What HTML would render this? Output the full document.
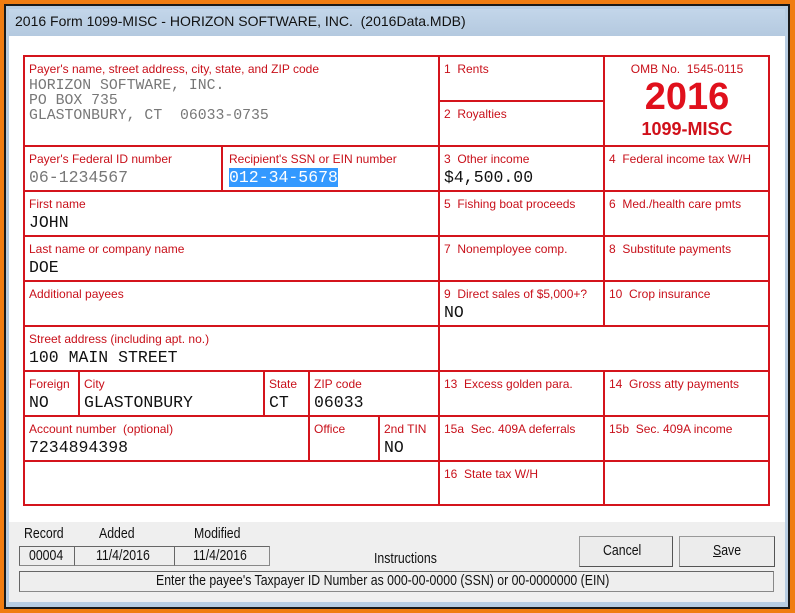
<!DOCTYPE html><html><head><style>
body{margin:0;width:795px;height:613px;overflow:hidden;background:#f07d12;position:relative;font-family:"Liberation Sans",sans-serif}
.a{position:absolute}
.h{position:absolute;height:2px;background:#d4141c}
.v{position:absolute;width:2px;background:#d4141c}
.l{position:absolute;color:#c8101a;font-size:12px;white-space:nowrap}
.t{position:absolute;font-family:"Liberation Mono",monospace;font-size:16.5px;color:#111;white-space:nowrap;margin-top:2px}
.g{color:#777}
.s{font-size:15px;color:#111;position:absolute;white-space:nowrap;transform:scaleX(.82);transform-origin:left}
.box{position:absolute;border:1px solid #888;border-top-color:#666;border-left-color:#666;background:#eee;height:18px}
</style></head><body>
<div class="a" style="left:4px;top:4px;width:786px;height:605px;background:#1a1a1a"></div>
<div class="a" style="left:6px;top:6px;width:782px;height:601px;background:#b8cde2"></div>
<div class="a" style="left:9px;top:9px;width:776px;height:27px;background:linear-gradient(#c3d6ea,#b4c9df)"></div>
<div class="a" style="left:15px;top:13px;font-size:14px;color:#111">2016 Form 1099-MISC - HORIZON SOFTWARE, INC.&nbsp; (2016Data.MDB)</div>
<div class="a" style="left:9px;top:36px;width:776px;height:486px;background:#fff"></div>
<div class="a" style="left:9px;top:522px;width:776px;height:80px;background:#efefef"></div>

<div class="h" style="left:23px;top:55px;width:747px"></div>
<div class="h" style="left:23px;top:145px;width:747px"></div>
<div class="h" style="left:23px;top:190px;width:747px"></div>
<div class="h" style="left:23px;top:235px;width:747px"></div>
<div class="h" style="left:23px;top:280px;width:747px"></div>
<div class="h" style="left:23px;top:325px;width:747px"></div>
<div class="h" style="left:23px;top:370px;width:747px"></div>
<div class="h" style="left:23px;top:415px;width:747px"></div>
<div class="h" style="left:23px;top:460px;width:747px"></div>
<div class="h" style="left:23px;top:504px;width:747px"></div>
<div class="h" style="left:439px;top:100px;width:166px"></div>
<div class="v" style="left:23px;top:55px;height:451px"></div>
<div class="v" style="left:768px;top:55px;height:451px"></div>
<div class="v" style="left:438px;top:55px;height:451px"></div>
<div class="v" style="left:603px;top:55px;height:272px"></div>
<div class="v" style="left:603px;top:370px;height:136px"></div>
<div class="v" style="left:221px;top:145px;height:47px"></div>
<div class="v" style="left:78px;top:370px;height:47px"></div>
<div class="v" style="left:263px;top:370px;height:47px"></div>
<div class="v" style="left:308px;top:370px;height:92px"></div>
<div class="v" style="left:378px;top:415px;height:47px"></div>

<div class="l" style="left:29px;top:62px">Payer's name, street address, city, state, and ZIP code</div>
<div class="t g" style="left:29px;top:77px;line-height:15px;font-size:14.8px">HORIZON SOFTWARE, INC.<br>PO BOX 735<br>GLASTONBURY, CT&nbsp; 06033-0735</div>
<div class="l" style="left:444px;top:62px">1&nbsp; Rents</div>
<div class="l" style="left:444px;top:107px">2&nbsp; Royalties</div>
<div class="l" style="left:604px;top:62px;width:166px;text-align:center">OMB No.&nbsp; 1545-0115</div>
<div class="a" style="left:604px;top:76px;width:166px;text-align:center;color:#e0101c;font-weight:bold;font-size:38px;line-height:42px">2016</div>
<div class="a" style="left:604px;top:119px;width:166px;text-align:center;color:#d0101a;font-weight:bold;font-size:18px">1099-MISC</div>

<div class="l" style="left:29px;top:152px">Payer's Federal ID number</div>
<div class="t g" style="left:29px;top:166px">06-1234567</div>
<div class="l" style="left:229px;top:152px">Recipient's SSN or EIN number</div>
<div class="t" style="left:229px;top:166px;background:#3399ff;color:#fff;line-height:19px">012-34-5678</div>
<div class="l" style="left:444px;top:152px">3&nbsp; Other income</div>
<div class="t" style="left:444px;top:166px">$4,500.00</div>
<div class="l" style="left:609px;top:152px">4&nbsp; Federal income tax W/H</div>

<div class="l" style="left:29px;top:197px">First name</div>
<div class="t" style="left:29px;top:211px">JOHN</div>
<div class="l" style="left:444px;top:197px">5&nbsp; Fishing boat proceeds</div>
<div class="l" style="left:609px;top:197px">6&nbsp; Med./health care pmts</div>

<div class="l" style="left:29px;top:242px">Last name or company name</div>
<div class="t" style="left:29px;top:256px">DOE</div>
<div class="l" style="left:444px;top:242px">7&nbsp; Nonemployee comp.</div>
<div class="l" style="left:609px;top:242px">8&nbsp; Substitute payments</div>

<div class="l" style="left:29px;top:287px">Additional payees</div>
<div class="l" style="left:444px;top:287px">9&nbsp; Direct sales of $5,000+?</div>
<div class="t" style="left:444px;top:301px">NO</div>
<div class="l" style="left:609px;top:287px">10&nbsp; Crop insurance</div>

<div class="l" style="left:29px;top:332px">Street address (including apt. no.)</div>
<div class="t" style="left:29px;top:346px">100 MAIN STREET</div>

<div class="l" style="left:29px;top:377px">Foreign</div>
<div class="t" style="left:29px;top:391px">NO</div>
<div class="l" style="left:84px;top:377px">City</div>
<div class="t" style="left:84px;top:391px">GLASTONBURY</div>
<div class="l" style="left:269px;top:377px">State</div>
<div class="t" style="left:269px;top:391px">CT</div>
<div class="l" style="left:314px;top:377px">ZIP code</div>
<div class="t" style="left:314px;top:391px">06033</div>
<div class="l" style="left:444px;top:377px">13&nbsp; Excess golden para.</div>
<div class="l" style="left:609px;top:377px">14&nbsp; Gross atty payments</div>

<div class="l" style="left:29px;top:422px">Account number&nbsp; (optional)</div>
<div class="t" style="left:29px;top:436px">7234894398</div>
<div class="l" style="left:314px;top:422px">Office</div>
<div class="l" style="left:384px;top:422px">2nd TIN</div>
<div class="t" style="left:384px;top:436px">NO</div>
<div class="l" style="left:444px;top:422px">15a&nbsp; Sec. 409A deferrals</div>
<div class="l" style="left:609px;top:422px">15b&nbsp; Sec. 409A income</div>
<div class="l" style="left:444px;top:467px">16&nbsp; State tax W/H</div>

<div class="s" style="left:24px;top:525px">Record</div>
<div class="s" style="left:99px;top:525px">Added</div>
<div class="s" style="left:194px;top:525px">Modified</div>
<div class="box" style="left:19px;top:546px;width:54px"></div>
<div class="box" style="left:74px;top:546px;width:99px"></div>
<div class="box" style="left:174px;top:546px;width:94px"></div>
<div class="s" style="left:29px;top:547px">00004</div>
<div class="s" style="left:96px;top:547px">11/4/2016</div>
<div class="s" style="left:193px;top:547px">11/4/2016</div>
<div class="s" style="left:374px;top:550px">Instructions</div>
<div class="a" style="left:579px;top:536px;width:92px;height:29px;border:1px solid #999;border-right-color:#555;border-bottom-color:#555;background:#ececec"></div>
<div class="s" style="left:603px;top:542px">Cancel</div>
<div class="a" style="left:679px;top:536px;width:94px;height:29px;border:1px solid #999;border-right-color:#555;border-bottom-color:#555;background:#ececec"></div>
<div class="s" style="left:713px;top:542px"><u>S</u>ave</div>
<div class="box" style="left:19px;top:571px;width:753px;height:19px"></div>
<div class="s" style="left:156px;top:572px">Enter the payee's Taxpayer ID Number as 000-00-0000 (SSN) or 00-0000000 (EIN)</div>
</body></html>
